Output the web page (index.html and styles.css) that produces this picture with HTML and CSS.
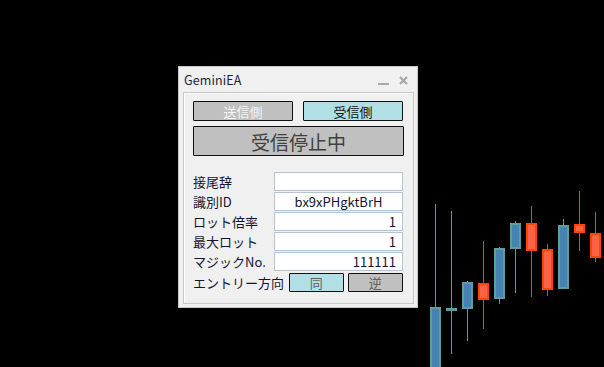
FILE: index.html
```html
<!DOCTYPE html>
<html>

<head>
    <title>GeminiEA</title>
    <meta charset="utf-8">
    <link rel="stylesheet" href="styles.css">
</head>

<body>
    <!-- Price chart behind the panel -->
    <svg class="chart" width="604" height="367" viewBox="0 0 604 367">
        <g class="wick-up">
            <line x1="435.5" y1="204" x2="435.5" y2="307"/>
            <line x1="451.5" y1="211" x2="451.5" y2="354"/>
            <line x1="467.5" y1="281" x2="467.5" y2="341"/>
            <line x1="499.5" y1="247" x2="499.5" y2="304"/>
            <line x1="515.5" y1="221" x2="515.5" y2="293"/>
            <line x1="563.5" y1="219" x2="563.5" y2="289"/>
        </g>
        <g class="wick-down">
            <line x1="483.5" y1="241" x2="483.5" y2="329"/>
            <line x1="531.5" y1="206" x2="531.5" y2="297"/>
            <line x1="547.5" y1="244" x2="547.5" y2="296"/>
            <line x1="579.5" y1="191" x2="579.5" y2="251"/>
            <line x1="595.5" y1="212" x2="595.5" y2="262"/>
        </g>
        <g class="body-up">
            <rect x="431" y="308" width="9" height="64"/>
            <rect x="447" y="309" width="9" height="1"/>
            <rect x="463" y="283" width="9" height="25"/>
            <rect x="495" y="249" width="9" height="49"/>
            <rect x="511" y="224" width="9" height="24"/>
            <rect x="559" y="226" width="9" height="62"/>
        </g>
        <g class="body-down">
            <rect x="479" y="284" width="9" height="15"/>
            <rect x="527" y="224" width="9" height="26"/>
            <rect x="543" y="250" width="9" height="39"/>
            <rect x="575" y="225" width="9" height="7"/>
            <rect x="591" y="234" width="9" height="23"/>
        </g>
    </svg>

    <div class="window">
        <div class="title-bar">
            <span class="title">GeminiEA</span>
            <span class="title-icons">
                <svg width="11" height="3" viewBox="0 0 11 3"><rect x="0" y="0" width="11" height="2" fill="#a8a8a8"/></svg>
                <svg width="9" height="9" viewBox="0 0 9 9"><path d="M1 1 L8 8 M8 1 L1 8" stroke="#a8a8a8" stroke-width="2.2"/></svg>
            </span>
        </div>

        <div class="panel">
            <div class="mode-group">
                <button type="button" class="btn btn-off mode-btn send">送信側</button>
                <button type="button" class="btn btn-on mode-btn">受信側</button>
            </div>
            <button type="button" class="btn btn-off status-btn">受信停止中</button>

            <div class="fields">
                <div class="field">
                    <span class="label">接尾辞</span>
                    <input type="text" class="value" value="">
                </div>
                <div class="field">
                    <span class="label">識別ID</span>
                    <input type="text" class="value center" value="bx9xPHgktBrH">
                </div>
                <div class="field">
                    <span class="label">ロット倍率</span>
                    <input type="text" class="value right" value="1">
                </div>
                <div class="field">
                    <span class="label">最大ロット</span>
                    <input type="text" class="value right" value="1">
                </div>
                <div class="field">
                    <span class="label">マジックNo.</span>
                    <input type="text" class="value right" value="111111">
                </div>
                <div class="field direction">
                    <span class="label">エントリー方向</span>
                    <button type="button" class="btn btn-on dir-btn">同</button>
                    <button type="button" class="btn btn-off dir-btn">逆</button>
                </div>
            </div>
        </div>
    </div>
</body>
</html>
```

FILE: styles.css
```css
* {
    box-sizing: border-box;
}

body {
    margin: 0;
    width: 604px;
    height: 367px;
    overflow: hidden;
    background-color: #000000;
    font-family: "Noto Sans CJK JP", "Noto Sans", sans-serif;
    color: #141432;
}

.chart {
    position: absolute;
    left: 0;
    top: 0;
}

.wick-up line {
    stroke: #5f9ea0;
    stroke-width: 1;
}

.wick-down line {
    stroke: #ff4500;
    stroke-width: 1;
}

.body-up rect {
    fill: #4682b4;
    stroke: #5f9ea0;
    stroke-width: 2;
}

.body-down rect {
    fill: #ff6347;
    stroke: #ff4500;
    stroke-width: 2;
}

/* Floating EA panel */
.window {
    position: absolute;
    left: 178px;
    top: 66px;
    width: 240px;
    height: 242px;
    background-color: #f0f0f0;
    border: 1px solid #c8c8c8;
    padding: 0 3px 4px 4px;
}

.title-bar {
    height: 25px;
    display: flex;
    align-items: center;
    justify-content: space-between;
    padding: 0 6px 0 1px;
}

.title {
    font-size: 12.5px;
    color: #1e1e3c;
    letter-spacing: 0.1px;
}

.title-icons {
    display: flex;
    align-items: center;
    gap: 10px;
    padding-top: 1px;
}

.title-icons svg:first-child {
    margin-top: 8px;
}

.panel {
    height: 212px;
    border: 1px solid #c8c8c8;
    box-shadow: inset 1px 1px 0 #ffffff;
    padding: 8px 10px 0 9px;
}

.btn {
    font-family: "Noto Sans CJK JP", "Noto Sans", sans-serif;
    border: 1px solid #101010;
    border-radius: 1px;
    padding: 0;
    margin: 0;
    line-height: 1;
}

.btn-off {
    background-color: #c0c0c0;
    color: #505050;
}

.btn-on {
    background-color: #b0e0e6;
    color: #101010;
}

.mode-group {
    display: flex;
    gap: 10px;
}

.mode-btn {
    width: 100px;
    height: 20px;
    font-size: 13px;
}

.mode-btn.send {
    color: #f4f4f4;
}

.status-btn {
    display: block;
    width: 211px;
    height: 30px;
    margin-top: 5px;
    font-size: 19px;
    color: #404040;
}

.fields {
    margin-top: 16px;
    display: flex;
    flex-direction: column;
    gap: 1px;
}

.field {
    display: flex;
    align-items: center;
    height: 19px;
}

.label {
    width: 82px;
    font-size: 13px;
    color: #141432;
    white-space: nowrap;
}

.value {
    width: 129px;
    height: 19px;
    border: 1px solid #b4c4d4;
    background-color: #ffffff;
    font-family: "Noto Sans CJK JP", "Noto Sans", sans-serif;
    font-size: 13px;
    color: #141432;
    padding: 0 6px;
    margin: 0;
    outline: none;
}

.value.center {
    text-align: center;
}

.value.right {
    text-align: right;
}

.direction {
    margin-top: 1px;
}

.direction .label {
    width: 97px;
}

.dir-btn {
    width: 55px;
    height: 19px;
    font-size: 13px;
    color: #606060;
}

.dir-btn + .dir-btn {
    margin-left: 4px;
    width: 56px;
}
```
